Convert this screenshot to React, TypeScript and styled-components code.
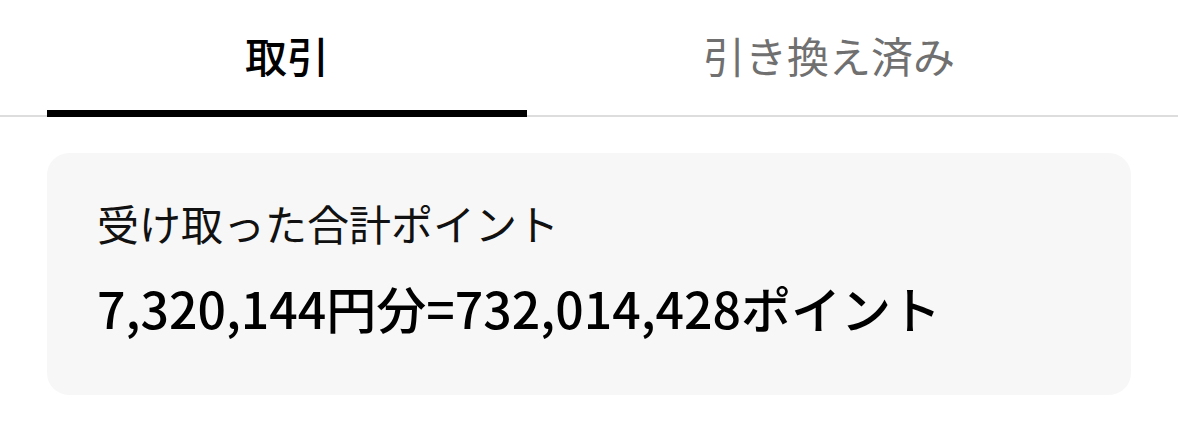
import * as React from 'react';
import styled, { createGlobalStyle } from 'styled-components';

const GlobalStyle = createGlobalStyle`
  body {
    margin: 0;
    background: #ffffff;
    font-family: 'Noto Sans CJK JP', 'Noto Sans', sans-serif;
  }
`;

const Page = styled.div`
  width: 1178px;
  height: 434px;
  overflow: hidden;
`;

const TabBar = styled.div`
  display: flex;
  padding: 0 47px;
  border-bottom: 2px solid #dddddd;
  height: 115px;
`;

type TabProps = {
  active: boolean;
};

const Tab = styled.div<TabProps>`
  position: relative;
  flex: ${({ active }) => (active ? '0 0 480px' : '1')};
  display: flex;
  justify-content: center;
  padding-top: 25px;
  font-size: 42px;
  line-height: 60px;
  font-weight: ${({ active }) => (active ? 500 : 400)};
  color: ${({ active }) => (active ? '#000000' : '#707070')};
`;

const Indicator = styled.div`
  position: absolute;
  left: 0;
  right: 0;
  bottom: -2px;
  height: 7px;
  background: #000000;
`;

const Card = styled.div`
  margin: 36px 47px 0;
  height: 242px;
  box-sizing: border-box;
  padding: 40px 50px 0;
  background: #f7f7f7;
  border-radius: 22px;
`;

const Label = styled.div`
  font-size: 42px;
  line-height: 60px;
  color: #111111;
`;

const Total = styled.div`
  margin-top: 21px;
  font-size: 50px;
  line-height: 66px;
  font-weight: 500;
  color: #000000;
`;

const tabs = ['取引', '引き換え済み'];

export default function App() {
  const [selected, setSelected] = React.useState(0);

  return (
    <Page>
      <GlobalStyle />
      <TabBar>
        {tabs.map((label, i) => (
          <Tab key={label} active={selected === i} onClick={() => setSelected(i)}>
            {label}
            {selected === i && <Indicator />}
          </Tab>
        ))}
      </TabBar>
      <Card>
        <Label>受け取った合計ポイント</Label>
        <Total>7,320,144円分=732,014,428ポイント</Total>
      </Card>
    </Page>
  );
}
